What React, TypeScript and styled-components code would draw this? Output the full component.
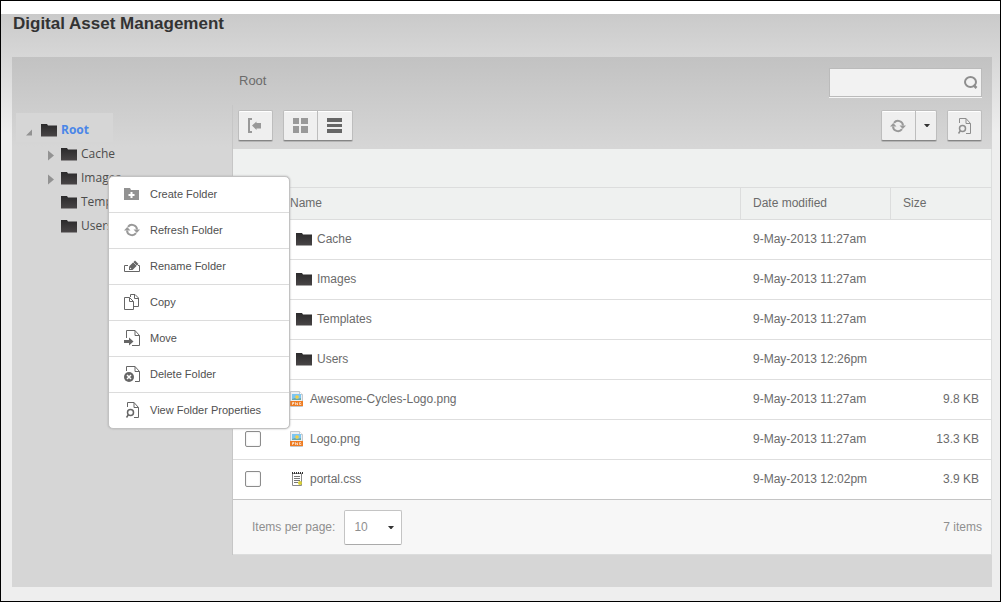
import React from "react";
import styled, { createGlobalStyle, css } from "styled-components";

const GlobalStyle = createGlobalStyle`
  *, *::before, *::after { box-sizing: border-box; }
  body {
    margin: 0;
    font-family: "Liberation Sans", Arial, sans-serif;
    font-size: 12px;
    line-height: 16px;
    color: #6b6b6b;
  }
  button, input, select { font: inherit; color: inherit; }
`;

const Frame = styled.div`
  display: flex;
  flex-direction: column;
  min-height: 100vh;
  padding-top: 13px;
  border: 1px solid #000;
  background: #fff;
`;

const Page = styled.main`
  flex: 1;
  padding: 0 8px 14px 11px;
  background: #eee linear-gradient(#cacaca, #eee 120px) no-repeat;
`;

const Title = styled.h1`
  height: 43px;
  margin: 0;
  padding-left: 1px;
  font-size: 17px;
  line-height: 20px;
  color: #333;
`;

const Panel = styled.div`
  position: relative;
  display: flex;
  padding-bottom: 32px;
  background: #d6d6d6 linear-gradient(#c2c2c2, #d6d6d6 90px) no-repeat;
`;

const Sidebar = styled.nav`
  flex: 0 0 220px;
  padding: 56px 0 0 4px;
`;

const Content = styled.section`
  flex: 1;
  min-width: 0;
`;

const Tree = styled.ul`
  margin: 0;
  padding: 0;
  list-style: none;
  font-family: "Open Sans", "Noto Sans", sans-serif;
`;

const Branch = styled(Tree)`
  padding-left: 20px;
`;

const TreeRow = styled.div<{ $current?: boolean }>`
  display: flex;
  align-items: center;
  gap: 1px;
  height: 24px;
  padding-left: 8px;
  ${(p) =>
    p.$current &&
    css`
      width: 97px;
      height: 29px;
      padding-top: 5px;
      background: #d6d6d6;
    `}
`;

const Toggle = styled.button`
  display: flex;
  width: 16px;
  height: 16px;
  padding: 0;
  border: 0;
  background: none;
`;

const TreeLink = styled.a<{ $current?: boolean }>`
  display: flex;
  align-items: center;
  gap: 4px;
  color: ${(p) => (p.$current ? "#4a86e8" : "#4c4c4c")};
  font-weight: ${(p) => (p.$current ? 700 : 400)};
  text-decoration: none;
`;

const Crumbs = styled.header`
  display: flex;
  justify-content: space-between;
  height: 48px;
  padding: 11px 10px 0 7px;
`;

const Crumb = styled.h2`
  margin: 5px 0 0;
  font-size: 13px;
  font-weight: 400;
  line-height: 16px;
`;

const SearchBox = styled.label`
  display: flex;
  align-items: center;
  width: 153px;
  height: 29px;
  padding-right: 2px;
  border: 1px solid #bbb;
  background: #f2f2f2;
  box-shadow: 0 1px 0 #f5f5f5;
`;

const SearchInput = styled.input`
  flex: 1;
  min-width: 0;
  height: 100%;
  border: 0;
  outline: 0;
  background: none;
`;

const Body = styled.div`
  border-left: 1px solid #c6c6c6;
`;

const Toolbar = styled.div`
  display: flex;
  gap: 10px;
  height: 44px;
  padding: 5px 10px 0 5px;
`;

const Spacer = styled.div`
  flex: 1;
`;

const ButtonGroup = styled.div`
  display: flex;
  height: 31px;
  border: 1px solid #bdbdbd;
  border-bottom-color: #858585;
  border-radius: 2px;
  background: #efefef;
  box-shadow: inset 0 1px 0 #fff, 0 1px 0 #b4b4b4;
`;

const ToolButton = styled.button<{ $narrow?: boolean }>`
  display: flex;
  align-items: center;
  justify-content: center;
  box-sizing: content-box;
  width: ${(p) => (p.$narrow ? 18 : 32)}px;
  height: 28px;
  padding: 1px 1px 0 0;
  border: 0;
  background: none;
  &:not(:first-child) {
    padding: ${(p) => (p.$narrow ? "1px 0 0 2px" : "1px 2px 0 0")};
    border-left: 1px solid #bdbdbd;
  }
`;

const ListHead = styled.div`
  height: 38px;
  border-right: 1px solid #dcdddd;
  background: #eff1f0;
`;

const Table = styled.table`
  width: 100%;
  border-collapse: separate;
  border-spacing: 0;
  border-right: 1px solid #dcdddd;
  table-layout: fixed;
  background: #fff;
`;

const HeadCell = styled.th<{ $width?: number }>`
  width: ${(p) => (p.$width ? `${p.$width}px` : "auto")};
  height: 33px;
  padding: 0 12px 2px;
  border: solid #dcdddd;
  border-width: 1px 0 1px 1px;
  background: #eff1f0;
  font-weight: 400;
  text-align: left;
  &:first-child { border-left: 0; }
`;

const Cell = styled.td<{ $right?: boolean }>`
  height: 40px;
  padding: 0 12px 1px;
  border-bottom: 1px solid #dedede;
  text-align: ${(p) => (p.$right ? "right" : "left")};
  &:not(:first-child) { padding-left: 13px; }
  tr:last-child > & { border-bottom-color: #c4c4c4; }
`;

const CheckBox = styled.input`
  display: block;
  appearance: none;
  width: 16px;
  height: 16px;
  margin: 0;
  border: 1px solid #8c8c8c;
  border-radius: 2px;
  background: #fff;
  box-shadow: inset 0 0 2px #ddd;
`;

const ItemName = styled.span<{ $folder: boolean }>`
  display: flex;
  align-items: center;
  gap: ${(p) => (p.$folder ? 5 : 6)}px;
  padding-left: ${(p) => (p.$folder ? 6 : 0)}px;
`;

const Footer = styled.footer`
  display: flex;
  align-items: center;
  justify-content: space-between;
  height: 55px;
  padding: 0 9px 0 19px;
  border: solid #dcdddd;
  border-width: 0 1px 1px 0;
  background: #f7f7f7;
  color: #8f8f8f;
`;

const PageSize = styled.label`
  display: flex;
  align-items: center;
  gap: 9px;
`;

const SelectWrap = styled.span`
  display: grid;
  align-items: center;
  > * { grid-area: 1 / 1; }
  > svg { justify-self: end; margin: 2px 7px 0 0; pointer-events: none; }
`;

const Select = styled.select`
  appearance: none;
  width: 58px;
  height: 35px;
  padding: 0 9px;
  border: 1px solid #c4c4c4;
  border-bottom-color: #aaa;
  border-radius: 2px;
  background: #fff;
`;

const Menu = styled.ul`
  position: absolute;
  top: 119px;
  left: 96px;
  width: 182px;
  margin: 0;
  padding: 0;
  border: 1px solid #c2c2c2;
  border-radius: 5px;
  background: #fff;
  box-shadow: 0 0 2px #aaa;
  list-style: none;
`;

const MenuItem = styled.li`
  height: 36px;
  border-top: 1px solid #dcdcdc;
  &:first-child { height: 35px; border-top: 0; }
`;

const MenuButton = styled.button`
  display: flex;
  align-items: center;
  gap: 10px;
  width: 100%;
  height: 35px;
  padding: 0 15px 1px;
  border: 0;
  background: none;
  color: #505050;
  font-size: 11px;
  text-align: left;
`;

const Svg = ({ w = 16, h = 16, children }: { w?: number; h?: number; children: React.ReactNode }) => (
  <svg width={w} height={h} viewBox={`0 0 ${w} ${h}`} fill="none" aria-hidden="true">
    {children}
  </svg>
);

const FolderIcon = () => (
  <Svg h={13}>
    <defs>
      <linearGradient id="folder" x1="0" y1="0" x2="0" y2="1">
        <stop offset="0" stopColor="#2b2a2b" />
        <stop offset="1" stopColor="#484546" />
      </linearGradient>
    </defs>
    <path d="M0 0h6l1 1.500h9V12.500H0z" fill="url(#folder)" />
  </Svg>
);

const CollapsedIcon = () => (
  <Svg><path d="M4 4.500v10l6-5z" fill="#929292" /></Svg>
);

const ExpandedIcon = () => (
  <Svg><path d="M8 7.500v6H2z" fill="#929292" /></Svg>
);

const SearchIcon = () => (
  <Svg>
    <ellipse cx="7.500" cy="7" rx="5.500" ry="5" stroke="#8e8e8e" strokeWidth="2" />
    <path d="M10.500 10l3 3" stroke="#8e8e8e" strokeWidth="2.500" />
  </Svg>
);

const CollapseIcon = () => (
  <Svg>
    <path d="M5 1H2v13h3" stroke="#999" strokeWidth="2" />
    <path d="M5 7.500L9.500 3.500V5H14v5.500H9.500V12z" fill="#999" />
  </Svg>
);

const GridIcon = () => (
  <Svg><path d="M1 0h6v6H1zM9 0h7v6H9zM1 8h6v7H1zM9 8h7v7H9z" fill="#999" /></Svg>
);

const ListIcon = () => (
  <Svg><path d="M1 0h15v4H1zM1 6h15v3H1zM1 11h15v4H1z" fill="#666" /></Svg>
);

const RefreshIcon = () => (
  <Svg>
    <path d="M4 4.800A5 4.800 0 0 1 13 7.500M12 11.200A5 4.800 0 0 1 3 8.500" stroke="#999" strokeWidth="2" />
    <path d="M9.500 7.500H16L12.800 11zM0 8.500h6.500L3.200 5z" fill="#999" />
  </Svg>
);

const CaretIcon = () => (
  <Svg w={8} h={6}><path d="M1 1h6L4.500 4h-1z" fill="#333" /></Svg>
);

const PropertiesIcon = ({ color = "#666" }: { color?: string }) => (
  <Svg>
    <path d="M3.500 5V.5H10l4.500 5v10H10M10 .5v5h4.500" stroke={color} />
    <circle cx="6.500" cy="10.500" r="3" stroke={color} strokeWidth="1.500" />
    <path d="M4.500 12.500l-2 3" stroke={color} strokeWidth="1.500" />
  </Svg>
);

const CreateIcon = () => (
  <Svg>
    <path d="M0 2h6l1 2h8v10H0z" fill="#929292" />
    <path d="M7.500 6v6M4.500 9h6" stroke="#fff" strokeWidth="2" />
  </Svg>
);

const RenameIcon = () => (
  <Svg>
    <path d="M4 7.500H.5v6h15v-6H14" stroke="#666" />
    <path d="M5 12V8.500L11 2.500 14.500 6 8.500 12z" fill="#666" />
    <path d="M9 4l4 4" stroke="#fff" strokeWidth=".6" />
    <path d="M6 11V9.500L7.500 11z" fill="#fff" />
  </Svg>
);

const CopyIcon = () => (
  <Svg>
    <path d="M6.500 3V.5h4.500l3.500 3.500v8.500h-5M10.500 .5V4.500h4" stroke="#666" />
    <path d="M.5 3.500h5l4 4v8h-9zM5.500 3.500v4h4" fill="#fff" stroke="#666" />
  </Svg>
);

const MoveIcon = () => (
  <Svg>
    <path d="M2.500 8V.5H11l4.500 5v10H8M11 .5v5h4.500" stroke="#666" />
    <path d="M0 10h5V7.500L9.500 11.500 5 15.500V13H0z" fill="#666" />
  </Svg>
);

const DeleteIcon = () => (
  <Svg>
    <path d="M2.500 5V.5H11l4.500 5v10H11M11 .5v5h4.500" stroke="#666" />
    <circle cx="5" cy="11" r="5" fill="#666" />
    <path d="M3 9l4 4M7 9l-4 4" stroke="#fff" strokeWidth="1.500" />
  </Svg>
);

const PngIcon = () => (
  <Svg w={14}>
    <path d="M.5.5h9l3 3v12H.5z" fill="#eef0f2" stroke="#c5c9cc" />
    <path d="M9.500.5v3h3" fill="#fff" stroke="#c5c9cc" />
    <path d="M2 3h9v6H2z" fill="#7cc6f2" />
    <path d="M2 8l3-1 2 1 4-1v2H2z" fill="#6aa9a8" />
    <circle cx="7" cy="6" r="1.800" fill="#f4cf43" />
    <path d="M0 10h13v5H0z" fill="#ee7c22" />
    <path d="M2.500 14v-2.500h1.500v1H2.500M5.500 14v-2.500l2 2.500v-2.500M11 11.500H9.500V13.500H11v-1" stroke="#fff" strokeWidth=".6" />
  </Svg>
);

const CssIcon = () => (
  <Svg w={14}>
    <path d="M2.500 2.500h9v12h-9z" fill="#fff" stroke="#888" />
    <path d="M2 2h11" stroke="#333" strokeWidth="2" strokeDasharray="1 1" />
    <path d="M4 5.500h6M4 7.500h6M4 9.500h6M4 11.500h4" stroke="#777" />
    <circle cx="10" cy="12" r="2" fill="#d9cf35" />
  </Svg>
);

const icons = { folder: FolderIcon, png: PngIcon, css: CssIcon };

const folders = [
  { name: "Cache", nested: true },
  { name: "Images", nested: true },
  { name: "Templates", nested: false },
  { name: "Users", nested: false },
];

const items: { name: string; kind: keyof typeof icons; date: string; size?: string }[] = [
  { name: "Cache", kind: "folder", date: "9-May-2013 11:27am" },
  { name: "Images", kind: "folder", date: "9-May-2013 11:27am" },
  { name: "Templates", kind: "folder", date: "9-May-2013 11:27am" },
  { name: "Users", kind: "folder", date: "9-May-2013 12:26pm" },
  { name: "Awesome-Cycles-Logo.png", kind: "png", date: "9-May-2013 11:27am", size: "9.8 KB" },
  { name: "Logo.png", kind: "png", date: "9-May-2013 11:27am", size: "13.3 KB" },
  { name: "portal.css", kind: "css", date: "9-May-2013 12:02pm", size: "3.9 KB" },
];

const actions = [
  { label: "Create Folder", Icon: CreateIcon },
  { label: "Refresh Folder", Icon: RefreshIcon },
  { label: "Rename Folder", Icon: RenameIcon },
  { label: "Copy", Icon: CopyIcon },
  { label: "Move", Icon: MoveIcon },
  { label: "Delete Folder", Icon: DeleteIcon },
  { label: "View Folder Properties", Icon: PropertiesIcon },
];

const FolderTree = () => (
  <Tree>
    <li>
      <TreeRow $current>
        <Toggle aria-label="Collapse Root"><ExpandedIcon /></Toggle>
        <TreeLink href="#root" $current><FolderIcon />Root</TreeLink>
      </TreeRow>
      <Branch>
        {folders.map((f) => (
          <li key={f.name}>
            <TreeRow>
              <Toggle aria-label={`Expand ${f.name}`} disabled={!f.nested}>
                {f.nested && <CollapsedIcon />}
              </Toggle>
              <TreeLink href={`#${f.name}`}><FolderIcon />{f.name}</TreeLink>
            </TreeRow>
          </li>
        ))}
      </Branch>
    </li>
  </Tree>
);

const FileTable = () => (
  <Table>
    <thead>
      <tr>
        <HeadCell $width={44} aria-label="Select" />
        <HeadCell>Name</HeadCell>
        <HeadCell $width={150}>Date modified</HeadCell>
        <HeadCell $width={101}>Size</HeadCell>
      </tr>
    </thead>
    <tbody>
      {items.map(({ name, kind, date, size }) => {
        const Icon = icons[kind];
        return (
          <tr key={name}>
            <Cell><CheckBox type="checkbox" aria-label={`Select ${name}`} /></Cell>
            <Cell><ItemName $folder={kind === "folder"}><Icon />{name}</ItemName></Cell>
            <Cell>{date}</Cell>
            <Cell $right>{size}</Cell>
          </tr>
        );
      })}
    </tbody>
  </Table>
);

export default function App() {
  return (
    <Frame>
      <GlobalStyle />
      <Page>
        <Title>Digital Asset Management</Title>
        <Panel>
          <Sidebar aria-label="Folders"><FolderTree /></Sidebar>
          <Content>
            <Crumbs>
              <Crumb>Root</Crumb>
              <SearchBox>
                <SearchInput type="text" aria-label="Search" />
                <SearchIcon />
              </SearchBox>
            </Crumbs>
            <Body>
              <Toolbar>
                <ButtonGroup>
                  <ToolButton aria-label="Hide folders"><CollapseIcon /></ToolButton>
                </ButtonGroup>
                <ButtonGroup>
                  <ToolButton aria-label="Grid view"><GridIcon /></ToolButton>
                  <ToolButton aria-label="List view"><ListIcon /></ToolButton>
                </ButtonGroup>
                <Spacer />
                <ButtonGroup>
                  <ToolButton aria-label="Refresh"><RefreshIcon /></ToolButton>
                  <ToolButton aria-label="Refresh options" $narrow><CaretIcon /></ToolButton>
                </ButtonGroup>
                <ButtonGroup>
                  <ToolButton aria-label="View properties"><PropertiesIcon color="#8e8e8e" /></ToolButton>
                </ButtonGroup>
              </Toolbar>
              <ListHead />
              <FileTable />
              <Footer>
                <PageSize>
                  Items per page:
                  <SelectWrap>
                    <Select defaultValue="10">
                      <option>10</option>
                      <option>25</option>
                      <option>50</option>
                    </Select>
                    <CaretIcon />
                  </SelectWrap>
                </PageSize>
                <span>7 items</span>
              </Footer>
            </Body>
          </Content>
          <Menu>
            {actions.map(({ label, Icon }) => (
              <MenuItem key={label}>
                <MenuButton><Icon />{label}</MenuButton>
              </MenuItem>
            ))}
          </Menu>
        </Panel>
      </Page>
    </Frame>
  );
}
